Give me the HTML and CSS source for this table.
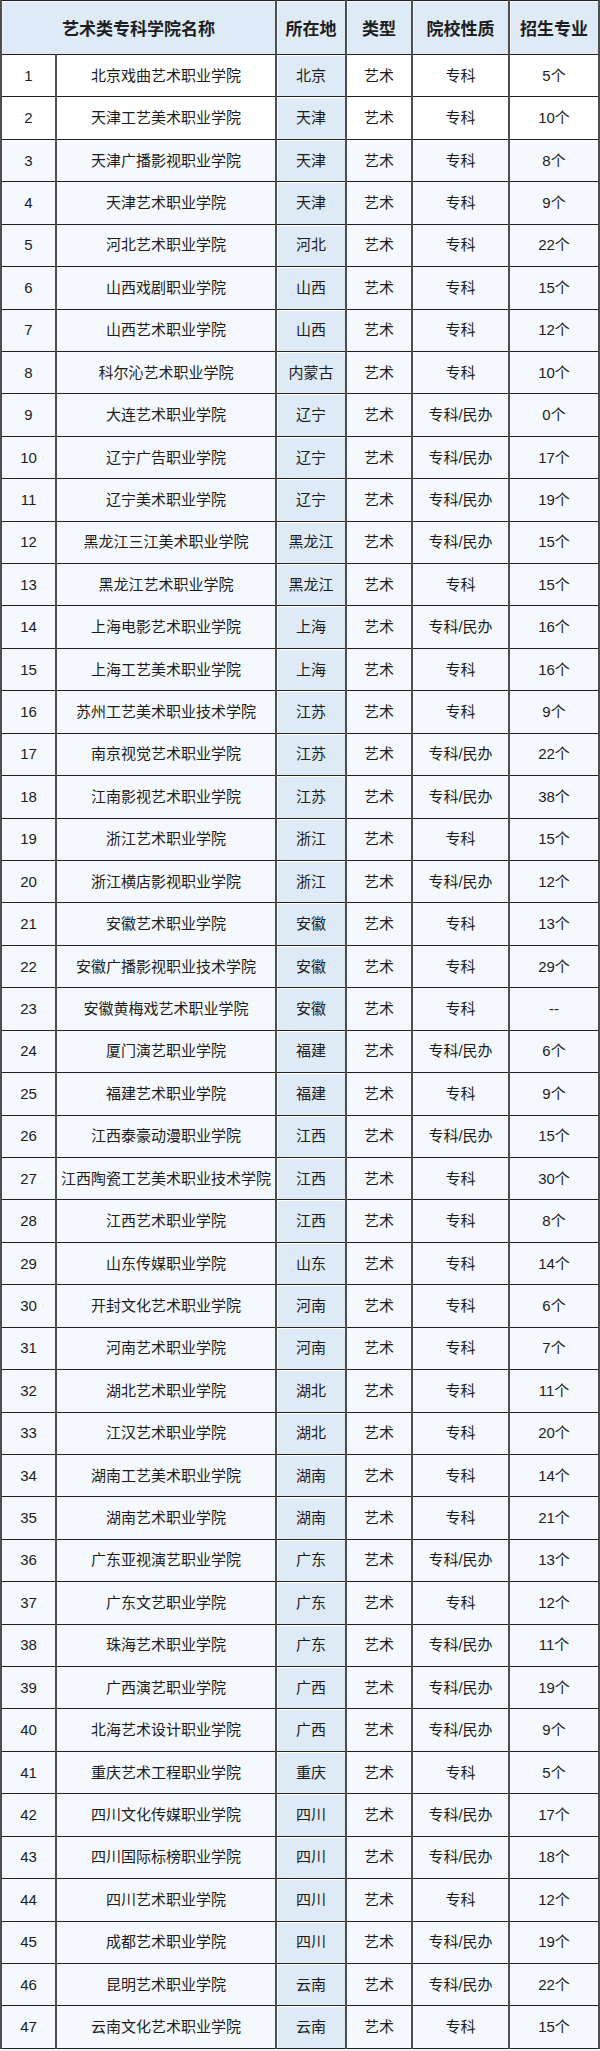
FILE: index.html
```html
<!DOCTYPE html>
<html lang="zh-CN">
<head>
<meta charset="utf-8">
<title>艺术类专科学院</title>
<link rel="stylesheet" href="styles.css">
</head>
<body>
<table class="schools">
<colgroup>
<col class="c-no"><col class="c-name"><col class="c-loc"><col class="c-type"><col class="c-kind"><col class="c-major">
</colgroup>
<thead>
<tr><th colspan="2">艺术类专科学院名称</th><th class="loc">所在地</th><th>类型</th><th>院校性质</th><th>招生专业</th></tr>
</thead>
<tbody>
<tr><td>1</td><td>北京戏曲艺术职业学院</td><td class="loc">北京</td><td>艺术</td><td>专科</td><td>5个</td></tr>
<tr><td>2</td><td>天津工艺美术职业学院</td><td class="loc">天津</td><td>艺术</td><td>专科</td><td>10个</td></tr>
<tr><td>3</td><td>天津广播影视职业学院</td><td class="loc">天津</td><td>艺术</td><td>专科</td><td>8个</td></tr>
<tr><td>4</td><td>天津艺术职业学院</td><td class="loc">天津</td><td>艺术</td><td>专科</td><td>9个</td></tr>
<tr><td>5</td><td>河北艺术职业学院</td><td class="loc">河北</td><td>艺术</td><td>专科</td><td>22个</td></tr>
<tr><td>6</td><td>山西戏剧职业学院</td><td class="loc">山西</td><td>艺术</td><td>专科</td><td>15个</td></tr>
<tr><td>7</td><td>山西艺术职业学院</td><td class="loc">山西</td><td>艺术</td><td>专科</td><td>12个</td></tr>
<tr><td>8</td><td>科尔沁艺术职业学院</td><td class="loc">内蒙古</td><td>艺术</td><td>专科</td><td>10个</td></tr>
<tr><td>9</td><td>大连艺术职业学院</td><td class="loc">辽宁</td><td>艺术</td><td>专科/民办</td><td>0个</td></tr>
<tr><td>10</td><td>辽宁广告职业学院</td><td class="loc">辽宁</td><td>艺术</td><td>专科/民办</td><td>17个</td></tr>
<tr><td>11</td><td>辽宁美术职业学院</td><td class="loc">辽宁</td><td>艺术</td><td>专科/民办</td><td>19个</td></tr>
<tr><td>12</td><td>黑龙江三江美术职业学院</td><td class="loc">黑龙江</td><td>艺术</td><td>专科/民办</td><td>15个</td></tr>
<tr><td>13</td><td>黑龙江艺术职业学院</td><td class="loc">黑龙江</td><td>艺术</td><td>专科</td><td>15个</td></tr>
<tr><td>14</td><td>上海电影艺术职业学院</td><td class="loc">上海</td><td>艺术</td><td>专科/民办</td><td>16个</td></tr>
<tr><td>15</td><td>上海工艺美术职业学院</td><td class="loc">上海</td><td>艺术</td><td>专科</td><td>16个</td></tr>
<tr><td>16</td><td>苏州工艺美术职业技术学院</td><td class="loc">江苏</td><td>艺术</td><td>专科</td><td>9个</td></tr>
<tr><td>17</td><td>南京视觉艺术职业学院</td><td class="loc">江苏</td><td>艺术</td><td>专科/民办</td><td>22个</td></tr>
<tr><td>18</td><td>江南影视艺术职业学院</td><td class="loc">江苏</td><td>艺术</td><td>专科/民办</td><td>38个</td></tr>
<tr><td>19</td><td>浙江艺术职业学院</td><td class="loc">浙江</td><td>艺术</td><td>专科</td><td>15个</td></tr>
<tr><td>20</td><td>浙江横店影视职业学院</td><td class="loc">浙江</td><td>艺术</td><td>专科/民办</td><td>12个</td></tr>
<tr><td>21</td><td>安徽艺术职业学院</td><td class="loc">安徽</td><td>艺术</td><td>专科</td><td>13个</td></tr>
<tr><td>22</td><td>安徽广播影视职业技术学院</td><td class="loc">安徽</td><td>艺术</td><td>专科</td><td>29个</td></tr>
<tr><td>23</td><td>安徽黄梅戏艺术职业学院</td><td class="loc">安徽</td><td>艺术</td><td>专科</td><td>--</td></tr>
<tr><td>24</td><td>厦门演艺职业学院</td><td class="loc">福建</td><td>艺术</td><td>专科/民办</td><td>6个</td></tr>
<tr><td>25</td><td>福建艺术职业学院</td><td class="loc">福建</td><td>艺术</td><td>专科</td><td>9个</td></tr>
<tr><td>26</td><td>江西泰豪动漫职业学院</td><td class="loc">江西</td><td>艺术</td><td>专科/民办</td><td>15个</td></tr>
<tr><td>27</td><td>江西陶瓷工艺美术职业技术学院</td><td class="loc">江西</td><td>艺术</td><td>专科</td><td>30个</td></tr>
<tr><td>28</td><td>江西艺术职业学院</td><td class="loc">江西</td><td>艺术</td><td>专科</td><td>8个</td></tr>
<tr><td>29</td><td>山东传媒职业学院</td><td class="loc">山东</td><td>艺术</td><td>专科</td><td>14个</td></tr>
<tr><td>30</td><td>开封文化艺术职业学院</td><td class="loc">河南</td><td>艺术</td><td>专科</td><td>6个</td></tr>
<tr><td>31</td><td>河南艺术职业学院</td><td class="loc">河南</td><td>艺术</td><td>专科</td><td>7个</td></tr>
<tr><td>32</td><td>湖北艺术职业学院</td><td class="loc">湖北</td><td>艺术</td><td>专科</td><td>11个</td></tr>
<tr><td>33</td><td>江汉艺术职业学院</td><td class="loc">湖北</td><td>艺术</td><td>专科</td><td>20个</td></tr>
<tr><td>34</td><td>湖南工艺美术职业学院</td><td class="loc">湖南</td><td>艺术</td><td>专科</td><td>14个</td></tr>
<tr><td>35</td><td>湖南艺术职业学院</td><td class="loc">湖南</td><td>艺术</td><td>专科</td><td>21个</td></tr>
<tr><td>36</td><td>广东亚视演艺职业学院</td><td class="loc">广东</td><td>艺术</td><td>专科/民办</td><td>13个</td></tr>
<tr><td>37</td><td>广东文艺职业学院</td><td class="loc">广东</td><td>艺术</td><td>专科</td><td>12个</td></tr>
<tr><td>38</td><td>珠海艺术职业学院</td><td class="loc">广东</td><td>艺术</td><td>专科/民办</td><td>11个</td></tr>
<tr><td>39</td><td>广西演艺职业学院</td><td class="loc">广西</td><td>艺术</td><td>专科/民办</td><td>19个</td></tr>
<tr><td>40</td><td>北海艺术设计职业学院</td><td class="loc">广西</td><td>艺术</td><td>专科/民办</td><td>9个</td></tr>
<tr><td>41</td><td>重庆艺术工程职业学院</td><td class="loc">重庆</td><td>艺术</td><td>专科</td><td>5个</td></tr>
<tr><td>42</td><td>四川文化传媒职业学院</td><td class="loc">四川</td><td>艺术</td><td>专科/民办</td><td>17个</td></tr>
<tr><td>43</td><td>四川国际标榜职业学院</td><td class="loc">四川</td><td>艺术</td><td>专科/民办</td><td>18个</td></tr>
<tr><td>44</td><td>四川艺术职业学院</td><td class="loc">四川</td><td>艺术</td><td>专科</td><td>12个</td></tr>
<tr><td>45</td><td>成都艺术职业学院</td><td class="loc">四川</td><td>艺术</td><td>专科/民办</td><td>19个</td></tr>
<tr><td>46</td><td>昆明艺术职业学院</td><td class="loc">云南</td><td>艺术</td><td>专科/民办</td><td>22个</td></tr>
<tr><td>47</td><td>云南文化艺术职业学院</td><td class="loc">云南</td><td>艺术</td><td>专科</td><td>15个</td></tr>
</tbody>
</table>
</body>
</html>
```

FILE: styles.css
```css
html, body {
  margin: 0;
  padding: 0;
  background: #f2f2f2;
}

body {
  font-family: "Liberation Sans", "Noto Sans CJK SC", sans-serif;
  color: #1c1c1c;
}

.schools {
  border-collapse: collapse;
  table-layout: fixed;
  width: 598px;
  background: #ffffff;
}

.c-no { width: 55px; }
.c-name { width: 220px; }
.c-loc { width: 70px; }
.c-type { width: 66px; }
.c-kind { width: 97px; }
.c-major { width: 90px; }

.schools th,
.schools td {
  border-top: 1px solid #222222;
  border-bottom: 1px solid #222222;
  border-left: 2px solid #4e4e4e;
  border-right: 2px solid #4e4e4e;
  text-align: center;
  vertical-align: middle;
  padding: 0 1px;
  white-space: nowrap;
  overflow: hidden;
}

.schools thead tr {
  height: 54px;
}

.schools th {
  background: #deeaf6;
  font-size: 17px;
  font-weight: bold;
  color: #1e1e1e;
  box-shadow: inset 1px 1px 0 #f4f8fc;
}

.schools tbody tr {
  height: 42.43px;
}

.schools td {
  font-size: 15px;
  line-height: 20px;
}

.schools tbody tr:nth-child(n+3) td {
  background: #f5f9fe;
}

.schools tbody td.loc,
.schools tbody tr:nth-child(n+3) td.loc {
  background: #deeaf6;
  box-shadow: inset 1px 1px 0 #ffffff;
}
```
